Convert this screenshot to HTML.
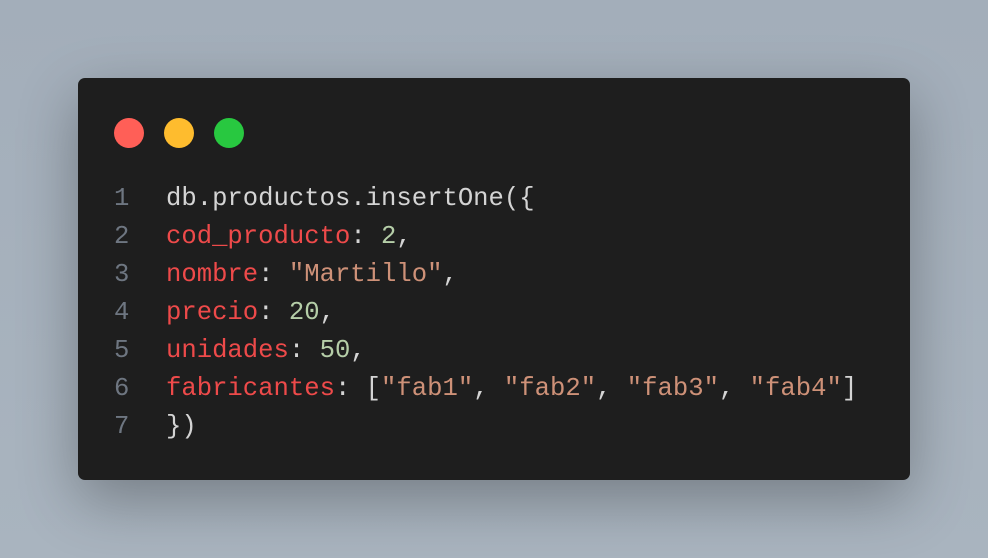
<!DOCTYPE html>
<html><head><meta charset="utf-8"><style>
html,body{margin:0;padding:0}
body{width:988px;height:558px;overflow:hidden;background:linear-gradient(180deg,#a3aeba 0%,#a9b4bf 100%);position:relative;font-family:"Liberation Mono",monospace}
.card{position:absolute;left:78px;top:78px;width:832px;height:402px;background:#1e1e1e;border-radius:7px;box-shadow:0 20px 60px rgba(0,0,0,.3)}
.dot{position:absolute;top:40px;width:30px;height:30px;border-radius:50%}
.l{position:absolute;left:0;font-size:25.6px;line-height:38px;white-space:pre;color:#d4d4d4}
.n{position:absolute;left:36px;color:#6e7681}
.c{position:absolute;left:88px}
.k{color:#ee4a4a}.s{color:#ce9178}.d{color:#b5cea8}
</style></head><body>
<div class="card">
<div class="dot" style="left:36px;background:#ff5f57"></div>
<div class="dot" style="left:86px;background:#febc2e"></div>
<div class="dot" style="left:136px;background:#28c840"></div>
<div class="l" style="top:102px"><span class="n">1</span><span class="c">db.productos.insertOne({</span></div>
<div class="l" style="top:140px"><span class="n">2</span><span class="c"><span class="k">cod_producto</span>: <span class="d">2</span>,</span></div>
<div class="l" style="top:178px"><span class="n">3</span><span class="c"><span class="k">nombre</span>: <span class="s">"Martillo"</span>,</span></div>
<div class="l" style="top:216px"><span class="n">4</span><span class="c"><span class="k">precio</span>: <span class="d">20</span>,</span></div>
<div class="l" style="top:254px"><span class="n">5</span><span class="c"><span class="k">unidades</span>: <span class="d">50</span>,</span></div>
<div class="l" style="top:292px"><span class="n">6</span><span class="c"><span class="k">fabricantes</span>: [<span class="s">"fab1"</span>, <span class="s">"fab2"</span>, <span class="s">"fab3"</span>, <span class="s">"fab4"</span>]</span></div>
<div class="l" style="top:330px"><span class="n">7</span><span class="c">})</span></div>
</div>
</body></html>
